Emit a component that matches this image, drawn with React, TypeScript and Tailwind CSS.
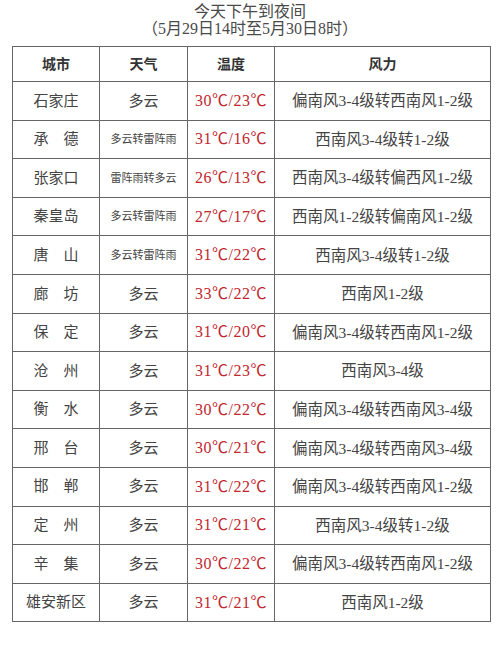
import React from "react";

const rows: [string, string, string, string][] = [
  ["石家庄", "多云", "30℃/23℃", "偏南风3-4级转西南风1-2级"],
  ["承　德", "多云转雷阵雨", "31℃/16℃", "西南风3-4级转1-2级"],
  ["张家口", "雷阵雨转多云", "26℃/13℃", "西南风3-4级转偏西风1-2级"],
  ["秦皇岛", "多云转雷阵雨", "27℃/17℃", "西南风1-2级转偏南风1-2级"],
  ["唐　山", "多云转雷阵雨", "31℃/22℃", "西南风3-4级转1-2级"],
  ["廊　坊", "多云", "33℃/22℃", "西南风1-2级"],
  ["保　定", "多云", "31℃/20℃", "偏南风3-4级转西南风1-2级"],
  ["沧　州", "多云", "31℃/23℃", "西南风3-4级"],
  ["衡　水", "多云", "30℃/22℃", "偏南风3-4级转西南风3-4级"],
  ["邢　台", "多云", "30℃/21℃", "偏南风3-4级转西南风3-4级"],
  ["邯　郸", "多云", "31℃/22℃", "偏南风3-4级转西南风1-2级"],
  ["定　州", "多云", "31℃/21℃", "西南风3-4级转1-2级"],
  ["辛　集", "多云", "30℃/22℃", "偏南风3-4级转西南风1-2级"],
  ["雄安新区", "多云", "31℃/21℃", "西南风1-2级"],
];

const font = "font-['Liberation_Serif','Noto_Sans_CJK_SC',serif]";

export default function App() {
  return (
    <div className={`w-[500px] h-[646px] bg-white text-[#444] ${font}`}>
      <div className="pt-[3px] text-center leading-[17px] text-[#4a4a4a]">
        <div className="text-[16px]">今天下午到夜间</div>
        <div className="text-[16px]">（5月29日14时至5月30日8时）</div>
      </div>
      <div className="px-[12px] pt-[9px]">
        <table className="w-[478px] border-collapse border-[1.5px] border-[#666] table-fixed">
          <colgroup>
            <col className="w-[87px]" />
            <col className="w-[88px]" />
            <col className="w-[87px]" />
            <col className="w-[216px]" />
          </colgroup>
          <thead>
            <tr className="h-[35px]">
              {["城市", "天气", "温度", "风力"].map((h) => (
                <th
                  key={h}
                  className="border-[1.5px] border-[#666] text-center text-[14px] font-bold text-[#333] p-0"
                >
                  {h}
                </th>
              ))}
            </tr>
          </thead>
          <tbody>
            {rows.map(([city, wx, temp, wind]) => (
              <tr key={city} className="h-[38.6px]">
                <td className="border-[1.5px] border-[#666] text-center text-[15px] p-0 whitespace-nowrap">
                  {city}
                </td>
                <td
                  className={`border-[1.5px] border-[#666] text-center p-0 whitespace-nowrap ${
                    wx.length > 2 ? "text-[11px]" : "text-[15px]"
                  }`}
                >
                  {wx}
                </td>
                <td className="border-[1.5px] border-[#666] text-center text-[16px] text-[#c0262d] p-0 whitespace-nowrap tracking-[0.5px]">
                  {temp}
                </td>
                <td className="border-[1.5px] border-[#666] text-center text-[15.5px] p-0 whitespace-nowrap">
                  {wind}
                </td>
              </tr>
            ))}
          </tbody>
        </table>
      </div>
    </div>
  );
}
